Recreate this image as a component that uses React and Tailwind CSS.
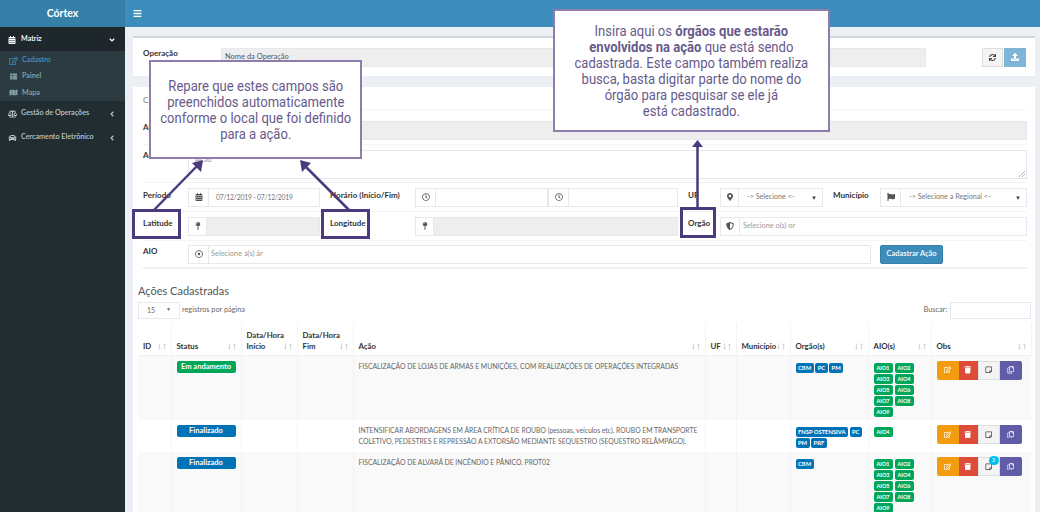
import {
  FaAngleDown, FaAngleLeft, FaBalanceScale, FaBars, FaCalendarAlt, FaCar, FaFlag, FaLongArrowAltDown,
  FaLongArrowAltUp, FaMap, FaMapMarkerAlt, FaMapPin, FaRegClock, FaRegCopy, FaRegDotCircle, FaRegEdit,
  FaRegStickyNote, FaShieldAlt, FaSync, FaThList, FaTrash, FaUpload,
} from "react-icons/fa"

const allAio = ["AIO1", "AIO2", "AIO3", "AIO4", "AIO5", "AIO6", "AIO7", "AIO8", "AIO9"]

const rows = [
  {
    status: "Em andamento",
    statusClass: "bg-[#00a65a]",
    acao: "FISCALIZAÇÃO DE LOJAS DE ARMAS E MUNIÇÕES, COM REALIZAÇÕES DE OPERAÇÕES INTEGRADAS",
    orgaos: ["CBM", "PC", "PM"],
    aios: allAio,
    rowClass: "h-[65px] bg-[#f9f9f9]",
  },
  {
    status: "Finalizado",
    statusClass: "bg-[#0073b7]",
    acao: "INTENSIFICAR ABORDAGENS EM ÁREA CRÍTICA DE ROUBO (pessoas, veículos etc). ROUBO EM TRANSPORTE COLETIVO, PEDESTRES E REPRESSÃO A EXTORSÃO MEDIANTE SEQUESTRO (SEQUESTRO RELÂMPAGO).",
    orgaos: ["FNSP OSTENSIVA", "PC", "PM", "PRF"],
    aios: ["AIO4"],
    rowClass: "h-[32px] bg-white",
  },
  {
    status: "Finalizado",
    statusClass: "bg-[#0073b7]",
    acao: "FISCALIZAÇÃO DE ALVARÁ DE INCÊNDIO E PÂNICO. PROT02",
    orgaos: ["CBM"],
    aios: allAio,
    badge: 3,
    rowClass: "h-[65px] bg-[#f9f9f9]",
  },
]

const headers = [
  ["ID", 33],
  ["Status", 70],
  ["Data/Hora Início", 56],
  ["Data/Hora Fim", 56],
  ["Ação", 352],
  ["UF", 31],
  ["Município", 54],
  ["Orgão(s)", 78],
  ["AIO(s)", 63],
  ["Obs", 100],
]

function Addon({ icon: Icon, width = "w-[21px]" }) {
  return (
    <div className={`flex h-full ${width} shrink-0 items-center justify-center border border-[#e6e8ec] bg-white text-[8px] text-[#555]`}>
      <Icon />
    </div>
  )
}

function Field({ children, className = "" }) {
  return (
    <div className={`flex h-full min-w-0 items-center border border-l-0 border-[#e6e8ec] ${className}`}>
      {children}
    </div>
  )
}

function Label({ children, className = "" }) {
  return <div className={`shrink-0 self-start text-[8px] font-bold text-[#333] ${className}`}>{children}</div>
}

function SelectField({ children, className = "" }) {
  return (
    <Field className={`justify-between px-[5px] text-[7.2px] text-[#777] ${className}`}>
      <span className="pl-[3px]">{children}</span>
      <span className="text-[6px] text-[#444]">▼</span>
    </Field>
  )
}

function Sidebar() {
  return (
    <aside className="w-[125px] shrink-0 bg-[#222d32] text-[7.2px] font-semibold text-[#b8c7ce]">
      <div className="flex h-[27px] items-center justify-center bg-[#367fa9] text-[10.5px] font-bold text-white">Córtex</div>
      <div className="flex h-[24px] items-center bg-[#1e282c] pl-[8px] pr-[9px] pt-[1px] text-white">
        <FaCalendarAlt className="mr-[5px] text-[8px]" />
        <span>Matriz</span>
        <FaAngleDown className="ml-auto text-[8px]" />
      </div>
      <div className="flex h-[50px] flex-col bg-[#2c3b41] pl-[9px] pt-[1.5px] text-[#8aa4af]">
        <div className="flex h-[16.5px] items-center font-bold text-[#3c8dbc]">
          <FaRegEdit className="mr-[4px] w-[9px] text-[8px]" />
          Cadastro
        </div>
        <div className="flex h-[16.5px] items-center">
          <FaThList className="mr-[4px] w-[9px] text-[7px]" />
          Painel
        </div>
        <div className="flex h-[16.5px] items-center">
          <FaMap className="mr-[4px] w-[9px] text-[7px]" />
          Mapa
        </div>
      </div>
      <div className="flex h-[24px] items-center pl-[8px] pr-[9px] pt-[1px]">
        <FaBalanceScale className="mr-[4px] w-[9px] text-[8px]" />
        <span>Gestão de Operações</span>
        <FaAngleLeft className="ml-auto text-[8px]" />
      </div>
      <div className="flex h-[24px] items-center pl-[8px] pr-[9px] pt-[1px]">
        <FaCar className="mr-[4px] w-[9px] text-[8px]" />
        <span>Cercamento Eletrônico</span>
        <FaAngleLeft className="ml-auto text-[8px]" />
      </div>
    </aside>
  )
}

function FormSection() {
  return (
    <div className="pl-[10px] pr-[8px]">
      <div className="flex h-[23px] items-center border-b border-[#f4f4f4] pt-[3px] text-[8px] text-[#777]">Cadastro</div>
      <div className="flex h-[35px] items-start border-b border-[#f4f4f4] pt-[11px]">
        <Label className="w-[78px]">Alvo</Label>
        <div className="h-[19px] flex-1 border border-[#e6e8ec] bg-[#eee]" />
      </div>
      <div className="flex h-[38px] items-start border-b border-[#f4f4f4] pt-[5px]">
        <Label className="-mt-[1px] w-[45px]">Assunto</Label>
        <div className="relative h-[29px] flex-1 border border-[#e6e8ec] px-[6px] pt-[3px] text-[7.5px] text-[#999]">
          Ação
          <svg className="absolute bottom-[1px] right-[1px]" width="6" height="6" stroke="#999" strokeWidth="0.7">
            <path d="M0 6 L6 0 M3 6 L6 3" />
          </svg>
        </div>
      </div>
      <div className="flex h-[29px] items-center border-b border-[#f4f4f4]">
        <Label className="w-[45px] pt-[6px]">Período</Label>
        <div className="flex h-[19px] w-[132px] shrink-0">
          <Addon icon={FaCalendarAlt} />
          <Field className="flex-1 px-[7px] text-[6.8px] tracking-[-0.2px] text-[#777]">07/12/2019 - 07/12/2019</Field>
        </div>
        <Label className="ml-[10px] w-[85px] pt-[6px]">Horário (Início/Fim)</Label>
        <div className="flex h-[19px] w-[263px] shrink-0">
          <Addon icon={FaRegClock} />
          <Field className="w-[112px]" />
          <Addon icon={FaRegClock} />
          <Field className="flex-1" />
        </div>
        <Label className="ml-[10px] w-[32px] pt-[6px]">UF</Label>
        <div className="flex h-[19px] w-[103px] shrink-0">
          <Addon icon={FaMapMarkerAlt} width="w-[19px]" />
          <SelectField className="flex-1">-&gt; Selecione &lt;-</SelectField>
        </div>
        <Label className="ml-[10px] w-[47px] pt-[6px]">Município</Label>
        <div className="flex h-[19px] flex-1">
          <Addon icon={FaFlag} />
          <SelectField className="flex-1">-&gt; Selecione a Regional &lt;-</SelectField>
        </div>
      </div>
      <div className="flex h-[29px] items-center border-b border-[#f4f4f4]">
        <Label className="w-[45px] pt-[5px]">Latitude</Label>
        <div className="flex h-[19px] w-[132px] shrink-0">
          <Addon icon={FaMapPin} width="w-[19px]" />
          <Field className="flex-1 bg-[#eee]" />
        </div>
        <Label className="ml-[10px] w-[85px] pt-[5px]">Longitude</Label>
        <div className="flex h-[19px] w-[263px] shrink-0">
          <Addon icon={FaMapPin} width="w-[19px]" />
          <Field className="flex-1 bg-[#eee]" />
        </div>
        <Label className="ml-[10px] w-[32px] pt-[5px]">Orgão</Label>
        <div className="flex h-[19px] flex-1">
          <Addon icon={FaShieldAlt} width="w-[20px]" />
          <Field className="flex-1 px-[3px] text-[7.3px] text-[#999]">Selecione o(s) or</Field>
        </div>
      </div>
      <div className="flex h-[28px] items-center border-b-2 border-[#f0f0f0]">
        <Label className="w-[45px] pt-[4px]">AIO</Label>
        <div className="flex h-[19px] w-[683px] shrink-0">
          <Addon icon={FaRegDotCircle} />
          <Field className="flex-1 px-[2px] text-[7.4px] text-[#999]">Selecione a(s) ár</Field>
        </div>
        <button className="ml-[9px] h-[19px] w-[63px] rounded-[2px] border border-[#367fa9] bg-[#3c8dbc] text-[7.5px] font-semibold text-white">
          Cadastrar Ação
        </button>
      </div>
    </div>
  )
}

function ActionButton({ className, icon: Icon, badge }) {
  return (
    <div className={`relative flex h-[19px] items-center justify-center text-[7.5px] ${className}`}>
      <Icon />
      {badge ? (
        <span className="absolute right-[0px] top-[-2px] flex h-[9px] w-[10px] items-center justify-center rounded-full bg-[#00c0ef] text-[5px] text-white">
          {badge}
        </span>
      ) : null}
    </div>
  )
}

function Table() {
  return (
    <table className="w-[893px] table-fixed border-collapse text-[6.8px] text-[#666]">
      <colgroup>
        {headers.map(([name, width]) => (
          <col key={name} style={{ width }} />
        ))}
      </colgroup>
      <thead>
        <tr className="h-[32px] border-b border-[#f0f0f0]">
          {headers.map(([name]) => (
            <th key={name} className="relative border-r border-[#f4f4f4] pb-[3px] pl-[5px] pr-[14px] text-left align-bottom text-[7.8px] font-bold leading-[11px] text-[#333]">
              {name}
              <span className="absolute bottom-[5px] right-[3px] flex text-[7px] text-[#d8d8d8]">
                <FaLongArrowAltDown className="-mr-[2px]" />
                <FaLongArrowAltUp />
              </span>
            </th>
          ))}
        </tr>
      </thead>
      <tbody>
        {rows.map((row, i) => (
          <tr key={i} className={row.rowClass}>
            <td className="border-r border-[#f4f4f4]" />
            <td className="border-r border-[#f4f4f4] px-[5px] pt-[5px] align-top">
              <div className={`h-[12px] rounded-[2px] text-center text-[7.5px] font-bold leading-[12px] text-white ${row.statusClass}`}>{row.status}</div>
            </td>
            <td className="border-r border-[#f4f4f4]" />
            <td className="border-r border-[#f4f4f4]" />
            <td className="border-r border-[#f4f4f4] pl-[5px] pr-[4px] pt-[5px] align-top leading-[11px]">{row.acao}</td>
            <td className="border-r border-[#f4f4f4]" />
            <td className="border-r border-[#f4f4f4]" />
            <td className="border-r border-[#f4f4f4] pl-[5px] pr-[2px] pt-[7px] align-top">
              <div className="flex flex-wrap gap-x-[1.5px] gap-y-[1px]">
                {row.orgaos.map((o) => (
                  <span key={o} className="rounded-[2px] bg-[#0073b7] px-[2.5px] text-[5.8px] font-bold leading-[10px] text-white">{o}</span>
                ))}
              </div>
            </td>
            <td className="border-r border-[#f4f4f4] pl-[5px] pt-[7px] align-top">
              <div className="flex w-[42px] flex-wrap gap-x-[2px] gap-y-[1px]">
                {row.aios.map((a) => (
                  <span key={a} className="h-[10px] w-[19px] rounded-[2px] bg-[#00a65a] text-center text-[5.5px] font-bold leading-[10px] text-white">{a}</span>
                ))}
              </div>
            </td>
            <td className="pl-[5px] pt-[5px] align-top">
              <div className="grid w-[85px] grid-cols-[22px_19px_22px_22px]">
                <ActionButton className="rounded-l-[2px] bg-[#f39c12] text-white" icon={FaRegEdit} />
                <ActionButton className="bg-[#dd4b39] text-white" icon={FaTrash} />
                <ActionButton className="border border-[#ddd] bg-[#f4f4f4] text-[#444]" icon={FaRegStickyNote} badge={row.badge} />
                <ActionButton className="rounded-r-[2px] bg-[#605ca8] text-white" icon={FaRegCopy} />
              </div>
            </td>
          </tr>
        ))}
      </tbody>
    </table>
  )
}

function Annotations() {
  return (
    <>
      <div className="absolute left-[149px] top-[60px] flex h-[99px] w-[213px] items-center justify-center border-2 border-[#8e7dac] bg-white text-center font-['Roboto'] text-[15px] leading-[16px] text-[#675a8b]">
        <p className="shrink-0 scale-x-[0.87] whitespace-nowrap">Repare que estes campos são<br />preenchidos automaticamente<br />conforme o local que foi definido<br />para a ação.</p>
      </div>
      <div className="absolute left-[553px] top-[9px] flex h-[123px] w-[277px] items-center justify-center border-2 border-[#8e7dac] bg-white text-center font-['Roboto'] text-[15px] leading-[16px] text-[#675a8b]">
        <p className="shrink-0 scale-x-[0.87] whitespace-nowrap">Insira aqui os <b>órgãos que estarão</b><br /><b>envolvidos na ação</b> que está sendo<br />cadastrada. Este campo também realiza<br />busca, basta digitar parte do nome do<br />órgão para pesquisar se ele já<br />está cadastrado.</p>
      </div>
      <div className="absolute left-[132px] top-[209px] h-[30px] w-[49px] border-[3px] border-[#4b3a7d]" />
      <div className="absolute left-[321px] top-[209px] h-[30px] w-[49px] border-[3px] border-[#4b3a7d]" />
      <div className="absolute left-[680px] top-[207px] h-[31px] w-[36px] border-[3px] border-[#4b3a7d]" />
      <svg className="pointer-events-none absolute left-0 top-0" width="1040" height="512" fill="none">
        <g stroke="#4b3a7d" strokeWidth="2.5">
          <path d="M154 210 L198 165" />
          <path d="M349 210 L304 165" />
          <path d="M697.5 209 L697.5 145" />
        </g>
        <g fill="#4b3a7d">
          <path d="M203 160 L192 163 L201 172 Z" />
          <path d="M300 160 L311 163 L302 172 Z" />
          <path d="M697.5 140 L692 147 L703 147 Z" />
        </g>
      </svg>
    </>
  )
}

export default function App() {
  return (
    <div className="relative flex h-[512px] w-[1040px] overflow-hidden bg-[#ecf0f5] font-['Lato','Noto_Sans',sans-serif]">
      <Sidebar />
      <main className="flex min-w-0 flex-1 flex-col">
        <header className="flex h-[27px] shrink-0 items-center bg-[#3c8dbc] pl-[8px] text-[9px] text-white">
          <FaBars />
        </header>
        <div className="flex flex-1 flex-col gap-[11px] pl-[8px] pr-[5px] pt-[9px]">
          <section className="flex h-[40px] shrink-0 items-center border-t-[2px] border-[#d2d6de] bg-white pl-[10px] pr-[9px]">
            <Label className="w-[78px] pt-[9px]">Operação</Label>
            <div className="flex h-[19px] w-[705px] items-center border border-[#e6e8ec] bg-[#eee] px-[3px] text-[7.5px] text-[#555]">Nome da Operação</div>
            <div className="ml-auto flex gap-[1px]">
              <div className="flex h-[19px] w-[21px] items-center justify-center border border-[#ddd] bg-[#f4f4f4] text-[7px] text-[#444]"><FaSync /></div>
              <div className="flex h-[19px] w-[22px] items-center justify-center bg-[#7fb5d6] text-[8px] text-white"><FaUpload /></div>
            </div>
          </section>
          <section className="flex-1 overflow-hidden bg-white">
            <FormSection />
            <div className="pl-[5px] pr-[4px]">
              <h3 className="mt-[15px] text-[11px] leading-[14px] text-[#555]">Ações Cadastradas</h3>
              <div className="mt-[3px] flex h-[18px] items-center text-[7.3px] text-[#666]">
                <div className="flex h-[17px] w-[42px] items-center justify-between border border-[#e6e8ec] px-[8px] text-[7px]">
                  <span>15</span>
                  <span className="text-[5px]">▼</span>
                </div>
                <span className="ml-[2px]">registros por página</span>
                <span className="ml-auto mr-[3px]">Buscar:</span>
                <div className="h-[17px] w-[81px] border border-[#e6e8ec]" />
              </div>
              <div className="mt-[4px]"><Table /></div>
            </div>
          </section>
        </div>
      </main>
      <Annotations />
    </div>
  )
}
